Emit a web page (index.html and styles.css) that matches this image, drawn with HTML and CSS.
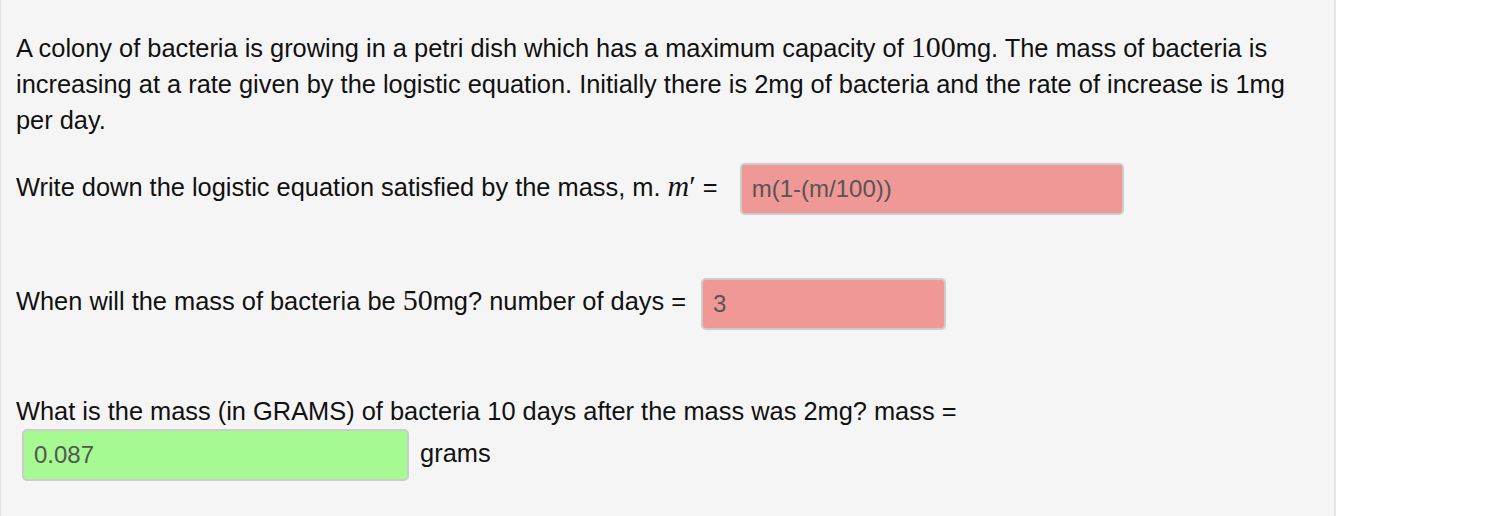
FILE: index.html
```html
<!DOCTYPE html>
<html lang="en">

<head>
    <meta charset="UTF-8">
    <title>Logistic growth</title>
    <link rel="stylesheet" href="styles.css">
</head>

<body>
    <div class="well">
        <p class="intro">A colony of bacteria is growing in a petri dish which has a maximum capacity of <span class="math">100</span>mg. The mass of bacteria is increasing at a rate given by the logistic equation. Initially there is 2mg of bacteria and the rate of increase is 1mg per day.</p>

        <div class="question q1">
            Write down the logistic equation satisfied by the mass, m. <span class="math"><i>m</i>&prime;</span> =
            <input type="text" class="answer wrong wide" value="m(1-(m/100))">
        </div>

        <div class="question q2">
            When will the mass of bacteria be <span class="math">50</span>mg? number of days =
            <input type="text" class="answer wrong short" value="3">
        </div>

        <div class="question q3">
            What is the mass (in GRAMS) of bacteria 10 days after the mass was 2mg? mass =<br>
            <input type="text" class="answer right mid" value="0.087"> grams
        </div>

        <p class="next">Online Model sheet: bacteria growth and logistic models</p>
    </div>
</body>

</html>
```

FILE: styles.css
```css
body {
    margin: 0;
    background-color: #fff;
    font-family: 'Liberation Sans', Arial, sans-serif;
    color: #111;
}

.well {
    width: 1336px;
    height: 516px;
    overflow: hidden;
    box-sizing: border-box;
    background-color: #f5f5f5;
    border-left: 1px solid #e3e3e3;
    border-right: 2px solid #e3e3e3;
    padding: 30px 0 0 15px;
    font-size: 25.4px;
    line-height: 36px;
}

.intro {
    margin: 0;
    width: 1300px;
}

.math {
    font-family: 'Liberation Serif', 'Times New Roman', serif;
    font-size: 30px;
    line-height: 20px;
}

.question {
    line-height: 52px;
}

.q1 {
    margin-top: 23px;
}

.q2 {
    margin-top: 60px;
}

.q3 {
    margin-top: 63px;
    line-height: 36px;
}

.answer {
    box-sizing: border-box;
    height: 52px;
    margin-left: 8px;
    padding: 0 10px;
    border: 2px solid #ccc;
    border-radius: 5px;
    font-family: 'Liberation Sans', Arial, sans-serif;
    font-size: 24px;
    color: #555;
    vertical-align: middle;
}

.q1 .answer {
    margin-left: 15px;
}

.q3 .answer {
    margin: 0 4px 0 6px;
}

.wrong {
    background-color: #f09896;
}

.right {
    background-color: #a6fa92;
}

.wide {
    width: 384px;
}

.short {
    width: 245px;
}

.mid {
    width: 387px;
}

.next {
    margin: 28px 0 0 0;
    font-weight: bold;
}
```
